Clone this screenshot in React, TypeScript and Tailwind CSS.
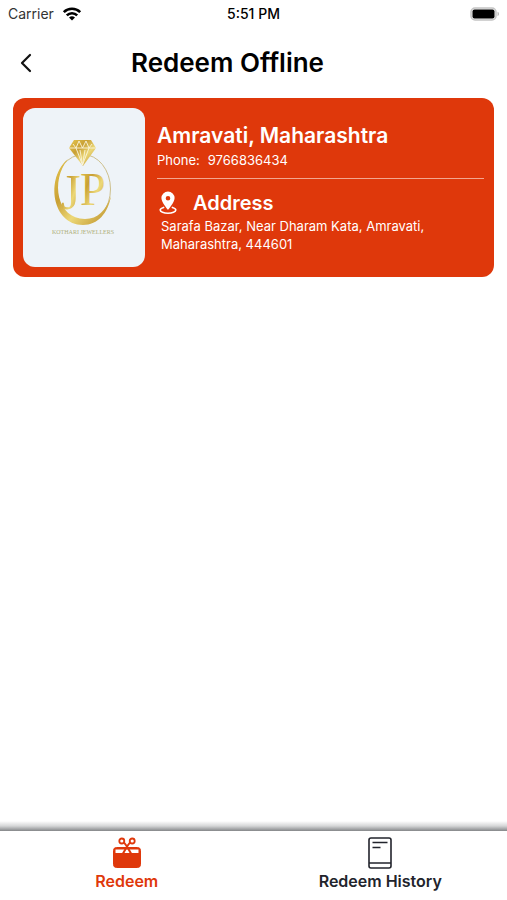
import type { ReactNode } from "react";

type Store = {
  name: string;
  phone: string;
  address: string;
};

const stores: Store[] = [
  {
    name: "Amravati, Maharashtra",
    phone: "9766836434",
    address: "Sarafa Bazar, Near Dharam Kata, Amravati, Maharashtra, 444601",
  },
];

function StatusBar() {
  return (
    <div className="grid grid-cols-3 items-center h-7 px-2 text-sm leading-5">
      <div className="flex items-center gap-2 text-[#333]">
        <span>Carrier</span>
        <svg width="20" height="14" viewBox="0 0 20 14" fill="none" stroke="#000" strokeWidth="2.6">
          <path d="M1.8 5.1a11.7 11.7 0 0 1 16.4 0" />
          <path d="M4.8 8.4a7.4 7.4 0 0 1 10.4 0" />
          <path d="M10 13.6l-3-3a4.3 4.3 0 0 1 6 0z" fill="#000" stroke="none" />
        </svg>
      </div>
      <span className="text-center font-medium text-black">5:51 PM</span>
      <svg className="justify-self-end" width="30" height="15" viewBox="0 0 30 15">
        <rect x="2" y="1" width="25" height="12" rx="4" fill="#eee" stroke="#c4c4c4" strokeWidth="1.5" />
        <rect x="3.5" y="2.5" width="22" height="9" rx="2" fill="#000" />
        <path d="M28.5 4.7c2.2.8 2.2 3.8 0 4.6z" fill="#bdbdbd" />
      </svg>
    </div>
  );
}

function JewellerLogo() {
  return (
    <svg width="122" height="159" viewBox="0 0 122 159" role="img" aria-label="Kothari Jewellers">
      <defs>
        <linearGradient id="gold" x1="0" y1="0" x2="1" y2="1">
          <stop offset="0" stopColor="#e6c74f" />
          <stop offset="0.35" stopColor="#c9a035" />
          <stop offset="0.6" stopColor="#ecd878" />
          <stop offset="1" stopColor="#b98a22" />
        </linearGradient>
      </defs>
      {/* ring, thick at the lower left and thin at the top */}
      <ellipse cx="60" cy="81" rx="27.5" ry="34.5" fill="none" stroke="#cdbf8c" strokeWidth="1" />
      <path
        fill="url(#gold)"
        d="M45 51C22 70 29 117 60 117c15 0 25-12 28-29-5 14-13 23-26 23C34 111 27 73 45 51z"
      />
      <path fill="url(#gold)" d="M51 32h17l5 8-13 18L46 40z" />
      <path
        fill="none"
        stroke="#fbf5dc"
        strokeWidth="0.9"
        d="M46 40h27M50 36l3 4 3-7 3.5 7 3.500-7 3 7 3-4M53 40l6.500 17L66 40M57 42l2.500 15L62 42"
      />
      <text x="38" y="101" fontSize="50" fontFamily="Liberation Serif, serif" fill="url(#gold)">
        J
      </text>
      <text x="57" y="97" fontSize="46" fontFamily="Liberation Serif, serif" fill="url(#gold)">
        P
      </text>
      <text x="60" y="126" fontSize="6" textAnchor="middle" fontFamily="Liberation Serif, serif" fill="#aeb07c">
        KOTHARI JEWELLERS
      </text>
    </svg>
  );
}

function PinIcon() {
  return (
    <svg width="18" height="24" viewBox="0 0 18 24" fill="none">
      <path
        fill="#fff"
        fillRule="evenodd"
        d="M9 0.500a6.600 6.600 0 0 0-6.600 6.600C2.400 11.500 9 19 9 19s6.600-7.500 6.600-11.900A6.600 6.600 0 0 0 9 0.500zm0 4.400a2.300 2.300 0 1 1 0 4.600 2.300 2.300 0 0 1 0-4.600z"
      />
      <path
        d="M4.600 16.400C2.500 17 1.200 17.900 1.200 19c0 1.800 3.500 3.200 7.800 3.200s7.800-1.400 7.800-3.200c0-1.100-1.300-2-3.400-2.600"
        stroke="#fff"
        strokeWidth="1.600"
        strokeLinecap="round"
      />
    </svg>
  );
}

function StoreCard({ store }: { store: Store }) {
  return (
    <article className="flex gap-3 rounded-xl bg-[#df380b] p-2.5 text-white">
      <div className="shrink-0 overflow-hidden rounded-xl bg-[#eef3f8]">
        <JewellerLogo />
      </div>
      <div className="min-w-0 flex-1 pt-4">
        <h2 className="text-[21px] leading-6 font-semibold">{store.name}</h2>
        <p className="flex gap-2 text-[13px] leading-6">
          <span>Phone:</span>
          <span>{store.phone}</span>
        </p>
        <hr className="mt-1.5 border-[#f3a68f]" />
        <div className="mt-3 flex items-center gap-4 pl-0.5">
          <PinIcon />
          <h3 className="text-xl leading-6 font-semibold">Address</h3>
        </div>
        <p className="mt-0.5 pl-1 pr-6 text-[13px] leading-[18px]">{store.address}</p>
      </div>
    </article>
  );
}

function GiftIcon() {
  return (
    <svg width="30" height="32" viewBox="0 0 30 32" fill="none" stroke="#df380b">
      <rect x="1.5" y="10.5" width="27" height="20" rx="3" fill="#df380b" strokeWidth="1" />
      <path d="M3.500 12.500h23V16h-23z" fill="#fff" stroke="none" />
      <circle cx="9.800" cy="4" r="2.500" strokeWidth="1.800" />
      <circle cx="20.200" cy="4" r="2.500" strokeWidth="1.800" />
      <path d="M12 5.500l3 4 4 7M18 5.500l-3 4-4 7" strokeWidth="2" strokeLinecap="round" />
    </svg>
  );
}

function BookIcon() {
  return (
    <svg width="24" height="32" viewBox="0 0 24 32" fill="none" stroke="#22242c" strokeWidth="1.600">
      <rect x="1" y="1" width="22" height="30" rx="2" />
      <path d="M1 26h22M4.500 5.500h15M4.500 10.500h8" />
    </svg>
  );
}

function TabLink({ href, active, icon, label }: { href: string; active?: boolean; icon: ReactNode; label: string }) {
  return (
    <a
      href={href}
      className={`flex flex-1 flex-col items-center text-base leading-6 font-semibold ${
        active ? "text-[#df380b]" : "text-[#22242c]"
      }`}
    >
      {icon}
      {label}
    </a>
  );
}

export default function App() {
  return (
    <div className="flex min-h-screen flex-col bg-white font-['Inter',sans-serif]">
      <StatusBar />
      <header className="flex h-[70px] items-center px-3">
        <button type="button" aria-label="Back" className="flex size-7 items-center justify-center">
          <svg width="12" height="20" viewBox="0 0 12 20" fill="none" stroke="#111" strokeWidth="2.200">
            <path d="M10 2L2 10l8 8" strokeLinecap="round" strokeLinejoin="round" />
          </svg>
        </button>
        <h1 className="flex-1 pr-20 text-center text-[26px] leading-8 font-semibold text-black">Redeem Offline</h1>
      </header>
      <main className="flex-1 px-[13px]">
        {stores.map((store) => (
          <StoreCard key={store.phone} store={store} />
        ))}
      </main>
      <div className="h-2.5 bg-linear-to-b from-white via-[#d5d6d7] to-[#858789]" />
      <nav className="flex h-[69px] pt-1.5">
        <TabLink href="#redeem" active icon={<GiftIcon />} label="Redeem" />
        <TabLink href="#history" icon={<BookIcon />} label="Redeem History" />
      </nav>
    </div>
  );
}
